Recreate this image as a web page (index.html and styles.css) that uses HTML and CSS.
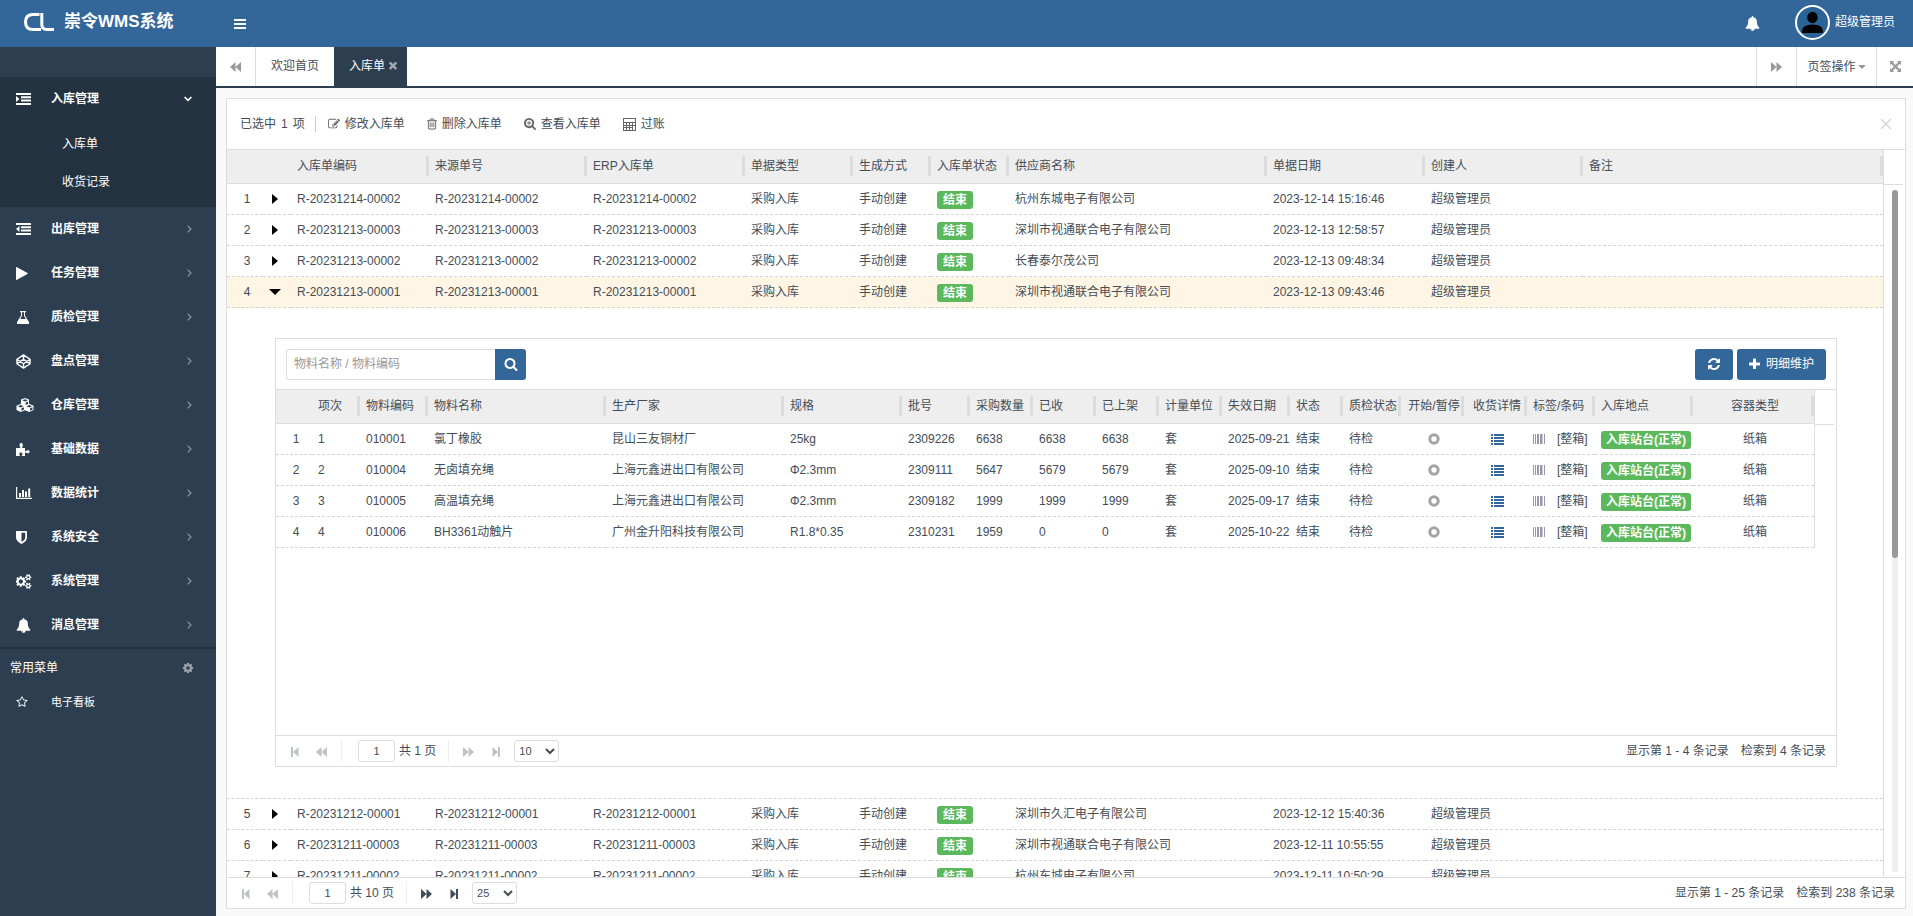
FILE: index.html
```html
<!DOCTYPE html>
<html lang="zh-CN">
<head>
<meta charset="utf-8">
<title>崇令WMS系统</title>
<link rel="stylesheet" href="styles.css">
</head>
<body>
<svg class="sprite" aria-hidden="true">
  <symbol id="i-bars" viewBox="0 0 12 10"><path d="M0 0h12v2H0zM0 4h12v2H0zM0 8h12v2H0z"/></symbol>
  <symbol id="i-bell" viewBox="0 0 1792 1792"><path d="M912 1696q0-16-16-16-59 0-101.500-42.500t-42.500-101.500q0-16-16-16t-16 16q0 73 51.500 124.500t124.500 51.500q16 0 16-16zm816-288q0 52-38 90t-90 38h-448q0 106-75 181t-181 75-181-75-75-181h-448q-52 0-90-38t-38-90q50-42 91-88t85-119.500 74.500-158.500 50-206 19.500-260q0-152 117-282.500t307-158.500q-8-19-8-39 0-40 28-68t68-28 68 28 28 68q0 20-8 39 190 28 307 158.500t117 282.500q0 139 19.500 260t50 206 74.500 158.500 85 119.500 91 88z"/></symbol>
  <symbol id="i-indent" viewBox="0 0 15 12"><path d="M0 0h15v2H0zM5 3.300h10v2H5zM5 6.600h10v2H5zM0 10h15v2H0zM0 3l3.500 3L0 9z"/></symbol>
  <symbol id="i-outdent" viewBox="0 0 15 12"><path d="M0 0h15v2H0zM5 3.300h10v2H5zM5 6.600h10v2H5zM0 10h15v2H0zM3.500 3v6L0 6z"/></symbol>
  <symbol id="i-play" viewBox="0 0 12 13"><path d="M0 .4v12.200q0 .6.500.300L11.500 7q.5-.5 0-1L.5.1Q0-.1 0 .4z"/></symbol>
  <symbol id="i-flask" viewBox="0 0 14 13"><path fill-rule="evenodd" d="M4 0h6v1.200H9v3.300l3.800 6.200Q13.800 13 11.800 13H2.200Q.2 13 1.200 10.700L5 4.500V1.200H4zM6 1.200v3.600L4.200 8h5.600L8 4.800V1.200z"/></symbol>
  <symbol id="i-codepen" viewBox="0 0 16 16"><path fill="none" stroke="currentColor" stroke-width="1.500" stroke-linejoin="round" d="M8 1l7 4.600v4.800L8 15l-7-4.600V5.600zM8 1v4.600M8 15v-4.600M1 5.600l7 4.800 7-4.800M1 10.400l7-4.800 7 4.800"/></symbol>
  <symbol id="i-cubes" viewBox="0 0 18 14"><path fill-rule="evenodd" d="M9 0l4 1.600v4.200L17.500 7.700V12l-4.200 2L9 12.200 4.700 14 .5 12V7.700L5 5.800V1.600zM9 1.200L6.200 2.300 9 3.500l2.800-1.200zM9.700 4.600V7L12 6V3.600zM4.700 7L2 8.200l2.700 1.200 2.800-1.200zM5.400 10.400v2.300l2.600-1.200V9.300zM13.300 7l-2.800 1.200 2.800 1.200L16 8.200zM14 10.400v2.300l2.500-1.200V9.300z"/></symbol>
  <symbol id="i-puzzle" viewBox="0 0 14 13"><path d="M0 5h3.800c.7 0 .6-.6.300-1.100C3 1.900 3.600 0 5.200 0s2.200 1.900 1.100 3.900C6 4.400 6 5 6.700 5H9v2.600c0 .6.500.7 1 .4 1.800-1.200 3.600-.8 3.600.8s-1.800 2-3.600.8c-.5-.3-1-.2-1 .5V13H6.300c-.6 0-.6-.5-.2-1 .8-1.200.4-2.500-1.200-2.500s-2 1.300-1.200 2.500c.4.500.4 1-.2 1H0z"/></symbol>
  <symbol id="i-chart" viewBox="0 0 16 12"><path d="M0 0h1.200v10.800H16V12H0zM3 6h2v4H3zM6 3h2v7H6zM9 4.500h2V10H9zM12.200 1.500h2V10h-2z"/></symbol>
  <symbol id="i-shield" viewBox="0 0 11 13"><path fill-rule="evenodd" d="M0 .8Q0 0 .8 0h9.400q.8 0 .8.800V6.500c0 3-2.500 5-5.500 6.500C2.500 11.500 0 9.500 0 6.500zM5.500 1.700v9.200c2-1.200 3.700-2.500 3.700-4.400V1.700z"/></symbol>
  <symbol id="i-cogs" viewBox="0 0 1920 1792"><path d="M832 896q0-106-75-181t-181-75-181 75-75 181 75 181 181 75 181-75 75-181zm768 512q0-52-38-90t-90-38-90 38-38 90q0 53 37.500 90.500t90.500 37.500 90.500-37.500 37.500-90.500zm0-1024q0-52-38-90t-90-38-90 38-38 90q0 53 37.500 90.500t90.500 37.500 90.500-37.500 37.500-90.500zm-384 421v185q0 10-7 19.500t-16 10.500l-155 24q-11 35-32 76 34 48 90 115 7 10 7 20 0 12-7 19-23 30-82.500 89.500t-78.500 59.500q-11 0-21-7l-115-90q-37 19-77 31-11 108-23 155-7 24-30 24h-186q-11 0-20-7.500t-10-17.500l-23-153q-34-10-75-31l-118 89q-7 7-20 7-11 0-21-8-144-133-144-160 0-9 7-19 10-14 41-53t47-61q-23-44-35-82l-152-24q-10-1-17-9.500t-7-19.500v-185q0-10 7-19.500t16-10.500l155-24q11-35 32-76-34-48-90-115-7-11-7-20 0-12 7-20 22-30 82-89t79-59q11 0 21 7l115 90q34-18 77-32 11-108 23-154 7-24 30-24h186q11 0 20 7.500t10 17.500l23 153q34 10 75 31l118-89q8-7 20-7 11 0 21 8 144 133 144 160 0 9-7 19-12 16-42 54t-45 60q23 48 34 82l152 23q10 2 17 10.500t7 19.500zm640 533v140q0 16-149 31-12 27-30 52 51 113 51 138 0 4-4 7-122 71-124 71-8 0-46-47t-52-68q-20 2-30 2t-30-2q-14 21-52 68t-46 47q-2 0-124-71-4-3-4-7 0-25 51-138-18-25-30-52-149-15-149-31v-140q0-16 149-31 13-29 30-52-51-113-51-138 0-4 4-7 4-2 35-20t59-34 30-16q8 0 46 46.500t52 67.500q20-2 30-2t30 2q51-71 92-112l6-2q4 0 124 70 4 3 4 7 0 25-51 138 17 23 30 52 149 15 149 31zm0-1024v140q0 16-149 31-12 27-30 52 51 113 51 138 0 4-4 7-122 71-124 71-8 0-46-47t-52-68q-20 2-30 2t-30-2q-14 21-52 68t-46 47q-2 0-124-71-4-3-4-7 0-25 51-138-18-25-30-52-149-15-149-31v-140q0-16 149-31 13-29 30-52-51-113-51-138 0-4 4-7 4-2 35-20t59-34 30-16q8 0 46 46.500t52 67.500q20-2 30-2t30 2q51-71 92-112l6-2q4 0 124 70 4 3 4 7 0 25-51 138 17 23 30 52 149 15 149 31z"/></symbol>
  <symbol id="i-cog" viewBox="0 0 1792 1792"><path d="M1152 896q0-106-75-181t-181-75-181 75-75 181 75 181 181 75 181-75 75-181zm512-109v222q0 12-8 23t-20 13l-185 28q-19 54-39 91 35 50 107 138 10 12 10 25t-9 23q-27 37-99 108t-94 71q-12 0-26-9l-138-108q-44 23-91 38-16 136-29 186-7 28-36 28h-222q-14 0-24.500-8.500t-11.500-21.500l-28-184q-49-16-90-37l-141 107q-10 9-25 9-14 0-25-11-126-114-165-168-7-10-7-23 0-12 8-23 15-21 51-66.500t54-70.500q-27-50-41-99l-183-27q-13-2-21-12.500t-8-23.500v-222q0-12 8-23t19-13l186-28q14-46 39-92-40-57-107-138-10-12-10-24 0-10 9-23 26-36 98.500-107.500t94.500-71.500q13 0 26 10l138 107q44-23 91-38 16-136 29-186 7-28 36-28h222q14 0 24.500 8.500t11.500 21.500l28 184q49 16 90 37l142-107q9-9 24-9 13 0 25 10 129 119 165 170 7 8 7 22 0 12-8 23-15 21-51 66.500t-54 70.500q26 50 41 98l183 28q13 2 21 12.500t8 23.500z"/></symbol>
  <symbol id="i-star" viewBox="0 0 1792 1792"><path d="M1201 1004l306-297-422-62-189-382-189 382-422 62 306 297-73 421 378-199 377 199zm527-357q0 22-26 48l-363 354 86 500q1 7 1 20 0 50-41 50-19 0-40-12l-449-236-449 236q-22 12-40 12-21 0-31.500-14.500t-10.500-35.500q0-6 2-20l86-500-364-354q-25-27-25-48 0-37 56-46l502-73 225-455q19-41 49-41t49 41l225 455 502 73q56 9 56 46z"/></symbol>
  <symbol id="i-edit" viewBox="0 0 1792 1792"><path d="M888 1184l116-116-152-152-116 116v56h96v96h56zm440-720q-16-16-33 1l-350 350q-17 17-1 33t33-1l350-350q17-17 1-33zm80 594v190q0 119-84.500 203.500t-203.500 84.500h-832q-119 0-203.500-84.500t-84.500-203.500v-832q0-119 84.500-203.500t203.500-84.500h832q63 0 117 25 15 7 18 23 3 17-9 29l-49 49q-14 14-32 8-23-6-45-6h-832q-66 0-113 47t-47 113v832q0 66 47 113t113 47h832q66 0 113-47t47-113v-126q0-13 9-22l64-64q15-15 35-7t20 29zm-96-738l288 288-672 672h-288v-288zm444 132l-92 92-288-288 92-92q28-28 68-28t68 28l152 152q28 28 28 68t-28 68z"/></symbol>
  <symbol id="i-trash" viewBox="192 100 1408 1600"><path d="M704 736v576q0 14-9 23t-23 9h-64q-14 0-23-9t-9-23v-576q0-14 9-23t23-9h64q14 0 23 9t9 23zm256 0v576q0 14-9 23t-23 9h-64q-14 0-23-9t-9-23v-576q0-14 9-23t23-9h64q14 0 23 9t9 23zm256 0v576q0 14-9 23t-23 9h-64q-14 0-23-9t-9-23v-576q0-14 9-23t23-9h64q14 0 23 9t9 23zm128 724v-948h-896v948q0 22 7 40.500t14.500 27 10.500 8.500h832q3 0 10.500-8.500t14.500-27 7-40.500zm-672-1076h448l-48-117q-7-9-17-11h-317q-10 2-17 11zm928 32v64q0 14-9 23t-23 9h-96v948q0 83-47 143.500t-113 60.500h-832q-66 0-113-58.500t-47-141.500v-952h-96q-14 0-23-9t-9-23v-64q0-14 9-23t23-9h309l70-167q15-37 54-63t79-26h320q40 0 79 26t54 63l70 167h309q14 0 23 9t9 23z"/></symbol>
  <symbol id="i-search" viewBox="0 0 1792 1792"><path d="M1216 832q0-185-131.500-316.500t-316.500-131.500-316.500 131.500-131.500 316.500 131.500 316.500 316.500 131.500 316.500-131.500 131.500-316.500zm512 832q0 52-38 90t-90 38q-54 0-90-38l-343-342q-179 124-399 124-143 0-273.500-55.500t-225-150-150-225-55.500-273.500 55.500-273.500 150-225 225-150 273.500-55.500 273.500 55.500 225 150 150 225 55.500 273.500q0 220-124 399l343 343q37 37 37 90z"/></symbol>
  <symbol id="i-zoom" viewBox="64 128 1664 1664"><path d="M1088 800v64q0 13-9.500 22.500t-22.500 9.500h-224v224q0 13-9.500 22.500t-22.500 9.500h-64q-13 0-22.500-9.500t-9.500-22.500v-224h-224q-13 0-22.500-9.500t-9.500-22.500v-64q0-13 9.500-22.500t22.500-9.500h224v-224q0-13 9.500-22.500t22.500-9.500h64q13 0 22.500 9.500t9.500 22.500v224h224q13 0 22.500 9.500t9.500 22.500zm128 32q0-185-131.500-316.500t-316.500-131.500-316.500 131.500-131.500 316.500 131.500 316.500 316.500 131.500 316.500-131.500 131.500-316.500zm512 832q0 52-38 90t-90 38q-54 0-90-38l-343-342q-179 124-399 124-143 0-273.500-55.500t-225-150-150-225-55.500-273.500 55.500-273.500 150-225 225-150 273.500-55.500 273.500 55.500 225 150 150 225 55.500 273.500q0 220-124 399l343 343q37 37 37 90z"/></symbol>
  <symbol id="i-calc" viewBox="0 0 13 13"><path fill-rule="evenodd" d="M0 0h13v13H0zM1 1v3h11V1zM1 5v2h2V5zM4 5v2h2V5zM7 5v2h2V5zM10 5v2h2V5zM1 8v1h2V8zM4 8v1h2V8zM7 8v1h2V8zM1 10v2h2v-2zM4 10v2h2v-2zM7 10v2h2v-2zM10 8v4h2V8z"/></symbol>
  <symbol id="i-refresh" viewBox="0 0 1792 1792"><path d="M1639 1056q0 5-1 7-64 268-268 434.500t-478 166.500q-146 0-282.500-55t-243.500-157l-129 129q-19 19-45 19t-45-19-19-45v-448q0-26 19-45t45-19h448q26 0 45 19t19 45-19 45l-137 137q71 66 161 102t187 36q134 0 250-65t186-179q11-17 53-117 8-23 30-23h192q13 0 22.500 9.500t9.500 22.500zm25-800v448q0 26-19 45t-45 19h-448q-26 0-45-19t-19-45 19-45l138-138q-148-137-349-137-134 0-250 65t-186 179q-11 17-53 117-8 23-30 23h-199q-13 0-22.500-9.500t-9.500-22.500v-7q65-268 270-434.500t480-166.500q146 0 284 55.500t245 156.500l130-129q19-19 45-19t45 19 19 45z"/></symbol>
  <symbol id="i-plus" viewBox="192 64 1408 1408"><path d="M1600 736v192q0 40-28 68t-68 28h-416v416q0 40-28 68t-68 28h-192q-40 0-68-28t-28-68v-416h-416q-40 0-68-28t-28-68v-192q0-40 28-68t68-28h416v-416q0-40 28-68t68-28h192q40 0 68 28t28 68v416h416q40 0 68 28t28 68z"/></symbol>
  <symbol id="i-times" viewBox="296 400 1200 1200"><path d="M1490 1322q0 40-28 68l-136 136q-28 28-68 28t-68-28l-294-294-294 294q-28 28-68 28t-68-28l-136-136q-28-28-28-68t28-68l294-294-294-294q-28-28-28-68t28-68l136-136q28-28 68-28t68 28l294 294 294-294q28-28 68-28t68 28l136 136q28 28 28 68t-28 68l-294 294 294 294q28 28 28 68z"/></symbol>
  <symbol id="i-prev" viewBox="0 0 11 10"><path d="M5.500 0v10L0 5zM11 0v10L5.500 5z"/></symbol>
  <symbol id="i-next" viewBox="0 0 11 10"><path d="M0 0l5.500 5L0 10zM5.500 0L11 5l-5.500 5z"/></symbol>
  <symbol id="i-first" viewBox="0 0 8 10"><path d="M0 0h2v10H0zM7.500 0v10L2 5z"/></symbol>
  <symbol id="i-last" viewBox="0 0 8 10"><path d="M6 0h2v10H6zM.5 0L6 5 .5 10z"/></symbol>
  <symbol id="i-expand" viewBox="0 0 12 12"><path d="M0 0h4.500L3.100 1.400 6 4.300l2.900-2.900L7.500 0H12v4.500l-1.400-1.400L7.700 6l2.900 2.900L12 7.500V12H7.500l1.400-1.400L6 7.700l-2.900 2.900L4.500 12H0V7.500l1.400 1.400L4.300 6 1.400 3.100 0 4.500z"/></symbol>
  <symbol id="i-right" viewBox="0 0 6 10"><path d="M0 0l6 5-6 5z"/></symbol>
  <symbol id="i-down" viewBox="0 0 12 6"><path d="M0 0h12L6 6z"/></symbol>
  <symbol id="i-chev-r" viewBox="0 0 5 8"><path fill="none" stroke="currentColor" stroke-width="1.200" d="M.6.600L4 4 .6 7.400"/></symbol>
  <symbol id="i-chev-d" viewBox="0 0 8 6"><path fill="none" stroke="currentColor" stroke-width="1.600" d="M.6 1L4 4.400 7.400 1"/></symbol>
  <symbol id="i-ring" viewBox="0 0 12 12"><circle cx="6" cy="6" r="4.200" fill="none" stroke="currentColor" stroke-width="3"/></symbol>
  <symbol id="i-list" viewBox="0 0 13 11"><path d="M0 0h2v2H0zM3 0h10v2H3zM0 3h2v2H0zM3 3h10v2H3zM0 6h2v2H0zM3 6h10v2H3zM0 9h2v2H0zM3 9h10v2H3z"/></symbol>
  <symbol id="i-barcode" viewBox="0 0 12 10"><path d="M0 0h1v10H0zM2 0h1v10H2zM4 0h2v10H4zM7 0h2v10H7zM9.500 0h.5v10h-.5zM11 0h1v10h-1z"/></symbol>
  <symbol id="i-close" viewBox="0 0 12 12"><path fill="none" stroke="currentColor" stroke-width="1.500" d="M1 1l10 10M11 1L1 11"/></symbol>
</svg>

<header class="topbar">
  <a class="brand" href="#">
    <svg class="logo" viewBox="0 0 30 18" aria-hidden="true"><path fill="none" stroke="#fff" stroke-width="3" d="M15.500 1.500H9Q1.500 1.500 1.500 9T9 16.500h8"/><path fill="none" stroke="#fff" stroke-width="3" d="M17.800 0v11.500q0 5 5 5H30"/></svg>
    <span>崇令WMS系统</span>
  </a>
  <button class="plain toggle" aria-label="菜单"><svg class="ic12x10"><use href="#i-bars"/></svg></button>
  <div class="user-area">
    <button class="plain" aria-label="通知"><svg class="ic15"><use href="#i-bell"/></svg></button>
    <a class="user" href="#">
      <svg class="avatar" viewBox="0 0 35 35" aria-hidden="true"><circle cx="17.500" cy="17.500" r="16.500" fill="#2b6297" stroke="#fff" stroke-width="2"/><ellipse cx="17.500" cy="12.500" rx="5.200" ry="5.800"/><path d="M7 28v-2q0-6.500 10.500-6.500T28 26v2z"/></svg>
      <span>超级管理员</span>
    </a>
  </div>
</header>

<div class="shell">
  <nav class="sidebar">
    <div class="group open">
      <a class="item" href="#"><svg class="ic15x12"><use href="#i-indent"/></svg><span>入库管理</span><svg class="chev chev-d"><use href="#i-chev-d"/></svg></a>
      <div class="subs">
        <a class="sub" href="#">入库单</a>
        <a class="sub" href="#">收货记录</a>
      </div>
    </div>
    <a class="item" href="#"><svg class="ic15x12"><use href="#i-outdent"/></svg><span>出库管理</span><svg class="chev"><use href="#i-chev-r"/></svg></a>
    <a class="item" href="#"><svg class="ic12x13"><use href="#i-play"/></svg><span>任务管理</span><svg class="chev"><use href="#i-chev-r"/></svg></a>
    <a class="item" href="#"><svg class="ic14x13"><use href="#i-flask"/></svg><span>质检管理</span><svg class="chev"><use href="#i-chev-r"/></svg></a>
    <a class="item" href="#"><svg class="ic15"><use href="#i-codepen"/></svg><span>盘点管理</span><svg class="chev"><use href="#i-chev-r"/></svg></a>
    <a class="item" href="#"><svg class="ic18x14"><use href="#i-cubes"/></svg><span>仓库管理</span><svg class="chev"><use href="#i-chev-r"/></svg></a>
    <a class="item" href="#"><svg class="ic14x13"><use href="#i-puzzle"/></svg><span>基础数据</span><svg class="chev"><use href="#i-chev-r"/></svg></a>
    <a class="item" href="#"><svg class="ic16x12"><use href="#i-chart"/></svg><span>数据统计</span><svg class="chev"><use href="#i-chev-r"/></svg></a>
    <a class="item" href="#"><svg class="ic11x13"><use href="#i-shield"/></svg><span>系统安全</span><svg class="chev"><use href="#i-chev-r"/></svg></a>
    <a class="item" href="#"><svg class="ic16x15"><use href="#i-cogs"/></svg><span>系统管理</span><svg class="chev"><use href="#i-chev-r"/></svg></a>
    <a class="item" href="#"><svg class="ic15"><use href="#i-bell"/></svg><span>消息管理</span><svg class="chev"><use href="#i-chev-r"/></svg></a>
    <div class="fav-head"><span>常用菜单</span><button class="plain fav-set" aria-label="设置"><svg class="ic12"><use href="#i-cog"/></svg></button></div>
    <a class="fav" href="#"><svg class="ic12"><use href="#i-star"/></svg><span>电子看板</span></a>
  </nav>

  <main class="main">
    <div class="tabs">
      <button class="plain tab-nav tab-prev" aria-label="向左"><svg class="ic11x10"><use href="#i-prev"/></svg></button>
      <a class="tab" href="#">欢迎首页</a>
      <a class="tab active" href="#">入库单<svg class="ic8"><use href="#i-times"/></svg></a>
      <div class="tab-tools">
        <button class="plain tab-nav tab-next" aria-label="向右"><svg class="ic11x10"><use href="#i-next"/></svg></button>
        <button class="plain tab-ops">页签操作<span class="caret"></span></button>
        <button class="plain tab-nav tab-full" aria-label="全屏"><svg class="ic11"><use href="#i-expand"/></svg></button>
      </div>
    </div>

    <section class="panel">
      <div class="toolbar">
        <span class="picked">已选中<span class="count">1</span>项</span>
        <button class="plain tool"><svg class="ic12"><use href="#i-edit"/></svg>修改入库单</button>
        <button class="plain tool"><svg class="ic10x12"><use href="#i-trash"/></svg>删除入库单</button>
        <button class="plain tool"><svg class="ic12"><use href="#i-zoom"/></svg>查看入库单</button>
        <button class="plain tool"><svg class="ic13"><use href="#i-calc"/></svg>过账</button>
        <button class="plain close" aria-label="关闭"><svg class="ic12"><use href="#i-close"/></svg></button>
      </div>

      <div class="grid outer">
        <table>
          <colgroup><col class="w36"><col class="w28"><col class="w138"><col class="w158"><col class="w158"><col class="w108"><col class="w78"><col class="w78"><col class="w258"><col class="w158"><col class="w158"><col></colgroup>
          <thead><tr><th class="bare"></th><th class="bare"></th><th>入库单编码</th><th>来源单号</th><th>ERP入库单</th><th>单据类型</th><th>生成方式</th><th>入库单状态</th><th>供应商名称</th><th>单据日期</th><th>创建人</th><th>备注</th></tr></thead>
          <tbody>
            <tr><td class="num">1</td><td class="exp"><svg class="tri-r"><use href="#i-right"/></svg></td><td>R-20231214-00002</td><td>R-20231214-00002</td><td>R-20231214-00002</td><td>采购入库</td><td>手动创建</td><td><span class="badge">结束</span></td><td>杭州东城电子有限公司</td><td>2023-12-14 15:16:46</td><td>超级管理员</td><td></td></tr>
            <tr><td class="num">2</td><td class="exp"><svg class="tri-r"><use href="#i-right"/></svg></td><td>R-20231213-00003</td><td>R-20231213-00003</td><td>R-20231213-00003</td><td>采购入库</td><td>手动创建</td><td><span class="badge">结束</span></td><td>深圳市视通联合电子有限公司</td><td>2023-12-13 12:58:57</td><td>超级管理员</td><td></td></tr>
            <tr><td class="num">3</td><td class="exp"><svg class="tri-r"><use href="#i-right"/></svg></td><td>R-20231213-00002</td><td>R-20231213-00002</td><td>R-20231213-00002</td><td>采购入库</td><td>手动创建</td><td><span class="badge">结束</span></td><td>长春泰尔茂公司</td><td>2023-12-13 09:48:34</td><td>超级管理员</td><td></td></tr>
            <tr class="picked-row"><td class="num">4</td><td class="exp"><svg class="tri-d"><use href="#i-down"/></svg></td><td>R-20231213-00001</td><td>R-20231213-00001</td><td>R-20231213-00001</td><td>采购入库</td><td>手动创建</td><td><span class="badge">结束</span></td><td>深圳市视通联合电子有限公司</td><td>2023-12-13 09:43:46</td><td>超级管理员</td><td></td></tr>
            <tr><td></td><td class="detail" colspan="11">
              <div class="subpanel">
                <div class="subtools">
                  <form class="search"><input type="text" placeholder="物料名称 / 物料编码" aria-label="物料名称 / 物料编码"><button type="button" aria-label="搜索"><svg class="ic14"><use href="#i-search"/></svg></button></form>
                  <button class="btn" aria-label="刷新"><svg class="ic14"><use href="#i-refresh"/></svg></button>
                  <button class="btn"><svg class="ic11"><use href="#i-plus"/></svg>明细维护</button>
                </div>
                <div class="grid inner">
                  <table>
                    <colgroup><col class="w36"><col class="w48"><col class="w68"><col class="w178"><col class="w178"><col class="w118"><col class="w68"><col class="w63"><col class="w63"><col class="w63"><col class="w63"><col class="w68"><col class="w53"><col class="w58"><col class="w63"><col class="w63"><col class="w68"><col class="w98"><col></colgroup>
                    <thead><tr><th class="bare"></th><th>项次</th><th>物料编码</th><th>物料名称</th><th>生产厂家</th><th>规格</th><th>批号</th><th>采购数量</th><th>已收</th><th>已上架</th><th>计量单位</th><th>失效日期</th><th>状态</th><th>质检状态</th><th class="mid">开始/暂停</th><th class="mid">收货详情</th><th>标签/条码</th><th>入库地点</th><th class="mid">容器类型</th></tr></thead>
                    <tbody>
                      <tr><td class="num">1</td><td>1</td><td>010001</td><td>氯丁橡胶</td><td>昆山三友铜材厂</td><td>25kg</td><td>2309226</td><td>6638</td><td>6638</td><td>6638</td><td>套</td><td>2025-09-21</td><td>结束</td><td>待检</td><td class="mid"><svg class="ic12 gray"><use href="#i-ring"/></svg></td><td class="mid"><svg class="ic13x11 blue"><use href="#i-list"/></svg></td><td><span class="codes"><svg class="ic12x10 code"><use href="#i-barcode"/></svg>[整箱]</span></td><td><span class="badge">入库站台(正常)</span></td><td class="mid">纸箱</td></tr>
                      <tr><td class="num">2</td><td>2</td><td>010004</td><td>无卤填充绳</td><td>上海元鑫进出口有限公司</td><td>Φ2.3mm</td><td>2309111</td><td>5647</td><td>5679</td><td>5679</td><td>套</td><td>2025-09-10</td><td>结束</td><td>待检</td><td class="mid"><svg class="ic12 gray"><use href="#i-ring"/></svg></td><td class="mid"><svg class="ic13x11 blue"><use href="#i-list"/></svg></td><td><span class="codes"><svg class="ic12x10 code"><use href="#i-barcode"/></svg>[整箱]</span></td><td><span class="badge">入库站台(正常)</span></td><td class="mid">纸箱</td></tr>
                      <tr><td class="num">3</td><td>3</td><td>010005</td><td>高温填充绳</td><td>上海元鑫进出口有限公司</td><td>Φ2.3mm</td><td>2309182</td><td>1999</td><td>1999</td><td>1999</td><td>套</td><td>2025-09-17</td><td>结束</td><td>待检</td><td class="mid"><svg class="ic12 gray"><use href="#i-ring"/></svg></td><td class="mid"><svg class="ic13x11 blue"><use href="#i-list"/></svg></td><td><span class="codes"><svg class="ic12x10 code"><use href="#i-barcode"/></svg>[整箱]</span></td><td><span class="badge">入库站台(正常)</span></td><td class="mid">纸箱</td></tr>
                      <tr><td class="num">4</td><td>4</td><td>010006</td><td>BH3361动触片</td><td>广州金升阳科技有限公司</td><td>R1.8*0.35</td><td>2310231</td><td>1959</td><td>0</td><td>0</td><td>套</td><td>2025-10-22</td><td>结束</td><td>待检</td><td class="mid"><svg class="ic12 gray"><use href="#i-ring"/></svg></td><td class="mid"><svg class="ic13x11 blue"><use href="#i-list"/></svg></td><td><span class="codes"><svg class="ic12x10 code"><use href="#i-barcode"/></svg>[整箱]</span></td><td><span class="badge">入库站台(正常)</span></td><td class="mid">纸箱</td></tr>
                    </tbody>
                  </table>
                  <div class="gutter"></div>
                </div>
                <div class="pager">
                  <button class="plain pg" disabled aria-label="首页"><svg class="ic8x10"><use href="#i-first"/></svg></button>
                  <button class="plain pg" disabled aria-label="上一页"><svg class="ic11x10"><use href="#i-prev"/></svg></button>
                  <label class="page-no"><input type="text" value="1"><span>共 1 页</span></label>
                  <button class="plain pg" disabled aria-label="下一页"><svg class="ic11x10"><use href="#i-next"/></svg></button>
                  <button class="plain pg" disabled aria-label="末页"><svg class="ic8x10"><use href="#i-last"/></svg></button>
                  <select aria-label="每页条数"><option>10</option></select>
                  <div class="counts"><span>显示第 1 - 4 条记录</span><span>检索到 4 条记录</span></div>
                </div>
              </div>
            </td></tr>
            <tr><td class="num">5</td><td class="exp"><svg class="tri-r"><use href="#i-right"/></svg></td><td>R-20231212-00001</td><td>R-20231212-00001</td><td>R-20231212-00001</td><td>采购入库</td><td>手动创建</td><td><span class="badge">结束</span></td><td>深圳市久汇电子有限公司</td><td>2023-12-12 15:40:36</td><td>超级管理员</td><td></td></tr>
            <tr><td class="num">6</td><td class="exp"><svg class="tri-r"><use href="#i-right"/></svg></td><td>R-20231211-00003</td><td>R-20231211-00003</td><td>R-20231211-00003</td><td>采购入库</td><td>手动创建</td><td><span class="badge">结束</span></td><td>深圳市视通联合电子有限公司</td><td>2023-12-11 10:55:55</td><td>超级管理员</td><td></td></tr>
            <tr><td class="num">7</td><td class="exp"><svg class="tri-r"><use href="#i-right"/></svg></td><td>R-20231211-00002</td><td>R-20231211-00002</td><td>R-20231211-00002</td><td>采购入库</td><td>手动创建</td><td><span class="badge">结束</span></td><td>杭州东城电子有限公司</td><td>2023-12-11 10:50:29</td><td>超级管理员</td><td></td></tr>
          </tbody>
        </table>
        <div class="gutter"><div class="track"><div class="thumb"></div></div></div>
      </div>

      <div class="pager">
        <button class="plain pg" disabled aria-label="首页"><svg class="ic8x10"><use href="#i-first"/></svg></button>
        <button class="plain pg" disabled aria-label="上一页"><svg class="ic11x10"><use href="#i-prev"/></svg></button>
        <label class="page-no"><input type="text" value="1"><span>共 10 页</span></label>
        <button class="plain pg" aria-label="下一页"><svg class="ic11x10"><use href="#i-next"/></svg></button>
        <button class="plain pg" aria-label="末页"><svg class="ic8x10"><use href="#i-last"/></svg></button>
        <select aria-label="每页条数"><option>25</option></select>
        <div class="counts"><span>显示第 1 - 25 条记录</span><span>检索到 238 条记录</span></div>
      </div>
    </section>
  </main>
</div>
</body>
</html>
```
FILE: styles.css
```css
* { box-sizing: border-box; }

body {
  margin: 0;
  height: 100vh;
  display: flex;
  flex-direction: column;
  overflow: hidden;
  background: #f9f9f9;
  color: #444d56;
  font: 12px/18px "Liberation Sans", "Noto Sans CJK SC", sans-serif;
}

a { color: inherit; text-decoration: none; }
svg { fill: currentColor; flex: none; }
button, input, select { font: inherit; color: inherit; }
.sprite { display: none; }
.plain { border: 0; background: none; padding: 0; display: flex; align-items: center; justify-content: center; }

.ic8 { width: 8px; height: 8px; }
.ic11 { width: 11px; height: 11px; }
.ic12 { width: 12px; height: 12px; }
.ic13 { width: 13px; height: 13px; }
.ic14 { width: 14px; height: 14px; }
.ic15 { width: 15px; height: 15px; }
.ic8x10 { width: 8px; height: 10px; }
.ic10x12 { width: 10px; height: 12px; }
.ic11x10 { width: 11px; height: 10px; }
.ic11x13 { width: 11px; height: 13px; }
.ic12x10 { width: 12px; height: 10px; }
.ic12x13 { width: 12px; height: 13px; }
.ic13x11 { width: 13px; height: 11px; }
.ic14x13 { width: 14px; height: 13px; }
.ic15x12 { width: 15px; height: 12px; }
.ic16x12 { width: 16px; height: 12px; }
.ic16x15 { width: 16px; height: 15px; }
.ic18x14 { width: 18px; height: 14px; }
.gray { color: #a3a3a3; }
.blue { color: #336699; }

/* Top bar */
.topbar {
  flex: none;
  display: flex;
  height: 47px;
  background: #336699;
  color: #fff;
}
.brand {
  width: 216px;
  padding: 0 0 4px 24px;
  display: flex;
  align-items: center;
  gap: 10px;
  font-size: 17px;
  font-weight: bold;
}
.logo { width: 30px; height: 18px; }
.toggle { width: 48px; }
.user-area { margin-left: auto; padding-right: 18px; display: flex; gap: 35px; }
.user { display: flex; align-items: center; gap: 5px; padding-bottom: 3px; }
.avatar { width: 35px; height: 35px; fill: #000; }

/* Side menu */
.shell { flex: 1; min-height: 0; display: flex; }
.sidebar {
  flex: none;
  width: 216px;
  padding-top: 30px;
  background: #2d3e50;
  color: #fff;
}
.group.open { background: #243342; }
.subs { padding: 4px 0 6px; }
.item {
  display: grid;
  grid-template-columns: 35px 1fr auto;
  align-items: center;
  height: 44px;
  padding: 0 24px 0 16px;
  font-weight: bold;
}
.chev { width: 5px; height: 8px; color: #8b95a0; }
.chev-d { width: 8px; height: 6px; color: #fff; }
.sub { display: block; padding: 10px 0 10px 62px; }
.fav-head {
  display: flex;
  align-items: center;
  justify-content: space-between;
  height: 40px;
  padding: 0 22px 0 10px;
  border-top: 2px solid #243342;
}
.fav-set { color: #9aa3ac; }
.fav {
  display: grid;
  grid-template-columns: 35px 1fr;
  align-items: center;
  height: 30px;
  padding-left: 16px;
  font-size: 11px;
}

/* Page tabs */
.main { flex: 1; min-width: 0; display: flex; flex-direction: column; }
.tabs {
  flex: none;
  display: flex;
  height: 41px;
  background: #fff;
  border-bottom: 2px solid #2d3e50;
}
.tab { display: flex; align-items: center; gap: 4px; padding: 0 15px 2px; }
.tab.active { background: #2d3e50; color: #fff; padding-right: 10px; }
.tab.active svg { color: #a0a7ae; }
.tab-nav { color: #999; }
.tab-prev { width: 40px; border-right: 1px solid #ddd; }
.tab-tools { margin-left: auto; display: flex; }
.tab-next { width: 40px; border-left: 1px solid #ddd; }
.tab-ops { width: 80px; gap: 2px; border-left: 1px solid #ddd; }
.caret { border: 4px solid transparent; border-top-color: #999; border-bottom: 0; }
.tab-full { width: 37px; border-left: 1px solid #ddd; }

/* Panel */
.panel {
  flex: 1;
  min-height: 0;
  display: flex;
  flex-direction: column;
  margin: 10px 7px 7px 10px;
  border: 1px solid #ddd;
  background: #fff;
}
.toolbar {
  flex: none;
  display: flex;
  align-items: center;
  gap: 22px;
  height: 50px;
  padding: 0 13px;
}
.picked { padding-right: 10px; margin-right: -10px; border-right: 1px solid #ccc; line-height: 16px; }
.count { margin: 0 5px; }
.tool { gap: 5px; }
.tool svg { color: #666; }
.close { margin-left: auto; color: #d6d6d6; }

/* Grids */
.grid { display: flex; border-top: 1px solid #ddd; overflow: hidden; }
.outer { flex: 1; min-height: 0; }
.inner { height: 346px; align-items: flex-start; }
table { flex: 1; width: 100%; min-width: 0; align-self: flex-start; table-layout: fixed; border-spacing: 0; border-right: 1px solid #ddd; }
th, td { padding: 0 3px 0 6px; white-space: nowrap; overflow: hidden; text-align: left; }
th {
  height: 34px;
  padding-bottom: 2px;
  font-weight: normal;
  border-bottom: 1px solid #ddd;
  background: #eee linear-gradient(#dcdcdc, #dcdcdc) right 6px / 3px 20px no-repeat;
}
th.bare { background: #eee; }
td { height: 31px; line-height: 30px; border-bottom: 1px dashed #d5d5d5; }
.mid { text-align: center; }
td.mid svg, .exp svg { display: block; margin: 0 auto; }
.num { text-align: center; padding: 0 0 0 4px; }
.exp { padding: 0 4px 0 0; color: #000; }
.tri-r { width: 6px; height: 10px; }
.tri-d { width: 12px; height: 6px; }
.picked-row td { background: #fff5e5; }
.codes { display: flex; align-items: center; gap: 12px; }
.code { color: #9a96a8; }
.badge {
  display: block;
  width: fit-content;
  min-width: 36px;
  margin-top: 2px;
  padding: 0 5px;
  border-radius: 3px;
  background: #5cb85c;
  color: #fff;
  font-weight: bold;
  line-height: 18px;
  text-align: center;
}
.gutter { flex: none; width: 21px; }
.gutter::before { content: ""; display: block; flex: none; height: 34px; margin-right: 2px; border-bottom: 1px solid #ddd; }
.outer .gutter { display: flex; flex-direction: column; }
.track { flex: 1; width: 6px; margin: 5px 0 5px 8px; border-radius: 3px; background: #eee; }
.thumb { height: 54%; border-radius: 3px; background: #999; }
.w28 { width: 28px; } .w36 { width: 36px; } .w48 { width: 48px; } .w53 { width: 53px; }
.w58 { width: 58px; } .w63 { width: 63px; } .w68 { width: 68px; } .w78 { width: 78px; }
.w98 { width: 98px; } .w108 { width: 108px; } .w118 { width: 118px; } .w138 { width: 138px; }
.w158 { width: 158px; } .w178 { width: 178px; } .w258 { width: 258px; }

/* Detail panel */
.detail { padding: 30px 46px 31px 12px; line-height: 18px; }
.subpanel { border: 1px solid #ddd; }
.subtools { display: flex; align-items: center; gap: 4px; height: 50px; padding: 0 10px; }
.search { display: flex; margin-right: auto; }
.search input {
  width: 209px;
  height: 31px;
  padding: 0 7px;
  border: 1px solid #ddd;
  border-right: 0;
  border-radius: 3px 0 0 3px;
  outline: 0;
}
.search input::placeholder { color: #999; }
.search button {
  width: 31px;
  height: 31px;
  padding: 0;
  border: 0;
  border-radius: 0 3px 3px 0;
  display: flex;
  align-items: center;
  justify-content: center;
  background: #336699;
  color: #fff;
}
.btn {
  display: flex;
  align-items: center;
  gap: 6px;
  height: 31px;
  padding: 0 12px 1px;
  border: 0;
  border-radius: 3px;
  background: #336699;
  color: #fff;
}

/* Pager */
.pager {
  flex: none;
  display: flex;
  align-items: center;
  height: 31px;
  padding: 0 10px 0 5px;
  border-top: 1px solid #ddd;
}
.pg { width: 27px; height: 28px; padding-top: 2px; color: #3e4c5a; }
.pg:disabled { color: #bfc3c7; }
.page-no {
  display: flex;
  align-items: center;
  gap: 4px;
  margin: 0 6px;
  padding: 0 12px 0 16px;
  border: solid #eee;
  border-width: 0 1px;
}
.page-no input {
  width: 37px;
  height: 22px;
  padding: 0;
  border: 1px solid #ddd;
  border-radius: 3px;
  font-size: 11px;
  text-align: center;
}
.pager select {
  width: 45px;
  height: 22px;
  margin-left: 5px;
  padding: 0;
  border: 1px solid #ddd;
  border-radius: 3px;
  background: #fff;
  font-size: 11px;
}
.counts { display: flex; gap: 12px; margin-left: auto; }
```
